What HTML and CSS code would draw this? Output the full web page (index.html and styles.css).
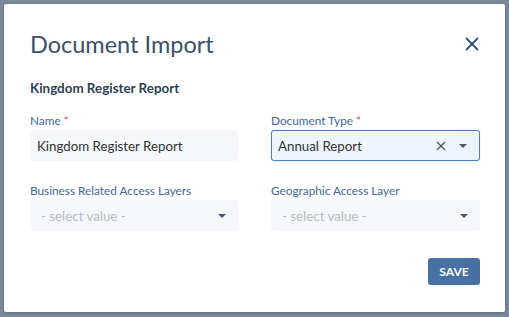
FILE: index.html
```html
<!DOCTYPE html>
<html lang="en">
<head>
    <meta charset="UTF-8">
    <title>Document Import</title>
    <link rel="stylesheet" href="styles.css">
</head>
<body>
    <div class="overlay">
        <div class="modal">
            <div class="modal-header">
                <h1 class="modal-title">Document Import</h1>
                <span class="close">
                    <svg width="14" height="14" viewBox="0 0 14 14"><path d="M1 1 L13 13 M13 1 L1 13" stroke="#3d5670" stroke-width="2" fill="none"/></svg>
                </span>
            </div>
            <h2 class="subtitle">Kingdom Register Report</h2>
            <div class="form-grid">
                <div class="field">
                    <label>Name <span class="req">*</span></label>
                    <div class="input">Kingdom Register Report</div>
                </div>
                <div class="field">
                    <label>Document Type <span class="req">*</span></label>
                    <div class="input select focused">
                        <span class="value">Annual Report</span>
                        <svg class="clear" width="10" height="10" viewBox="0 0 10 10"><path d="M1 1 L9 9 M9 1 L1 9" stroke="#555" stroke-width="1.3" fill="none"/></svg>
                        <span class="caret"></span>
                    </div>
                </div>
                <div class="field">
                    <label>Business Related Access Layers</label>
                    <div class="input select">
                        <span class="value placeholder">- select value -</span>
                        <span class="caret"></span>
                    </div>
                </div>
                <div class="field">
                    <label>Geographic Access Layer</label>
                    <div class="input select">
                        <span class="value placeholder">- select value -</span>
                        <span class="caret"></span>
                    </div>
                </div>
            </div>
            <div class="modal-footer">
                <button class="save">SAVE</button>
            </div>
        </div>
    </div>
</body>
</html>
```
FILE: styles.css
```css
body {
    margin: 0;
    font-family: Lato, "Open Sans", sans-serif;
    background-color: #7c8b9b;
}

.overlay {
    width: 509px;
    height: 317px;
    padding: 4px 4px 0 4px;
    box-sizing: border-box;
}

.modal {
    width: 501px;
    height: 308px;
    background-color: #fff;
    border-radius: 2px;
    box-sizing: border-box;
    padding: 0 25px 0 26px;
    box-shadow: 0 1px 4px rgba(0, 0, 0, 0.25);
}

.modal-header {
    display: flex;
    justify-content: space-between;
    align-items: center;
    height: 76px;
    padding-top: 4px;
    box-sizing: border-box;
}

.modal-title {
    margin: 0;
    font-size: 23.5px;
    font-weight: 400;
    color: #3a506a;
}

.close {
    display: flex;
    margin-right: 1px;
}

.subtitle {
    margin: 0;
    font-size: 13.4px;
    line-height: 16px;
    font-weight: 700;
    color: #2f3f52;
    height: 33px;
}

.form-grid {
    display: grid;
    grid-template-columns: 208px 209px;
    column-gap: 33px;
    row-gap: 22px;
}

.field label {
    display: block;
    font-size: 11.8px;
    color: #3f6799;
    height: 15px;
    line-height: 15px;
}

.req {
    color: #e04848;
}

.input {
    height: 31px;
    margin-top: 2px;
    background-color: #f5f7fa;
    border-radius: 3px;
    display: flex;
    align-items: center;
    padding: 0 8px 0 7px;
    box-sizing: border-box;
    font-size: 13.3px;
    color: #333;
}

.select .value {
    flex: 1;
}

.placeholder {
    color: #b5bcc5;
    padding-left: 4px;
}

.focused {
    background-color: #eef5fd;
    border: 1px solid #4d7fc0;
    box-shadow: 0 0 1px rgba(77, 127, 192, 0.5);
    padding-left: 6px;
}

.clear {
    margin-right: 13px;
}

.caret {
    width: 0;
    height: 0;
    border-left: 4px solid transparent;
    border-right: 4px solid transparent;
    border-top: 4px solid #3f5874;
    margin-right: 4px;
}

.modal-footer {
    display: flex;
    justify-content: flex-end;
    padding-top: 27px;
}

.save {
    width: 52px;
    height: 27px;
    border: none;
    border-radius: 3px;
    background-color: #4671a2;
    color: #fff;
    font-family: Lato, sans-serif;
    font-weight: 700;
    font-size: 12px;
    cursor: pointer;
}
```
